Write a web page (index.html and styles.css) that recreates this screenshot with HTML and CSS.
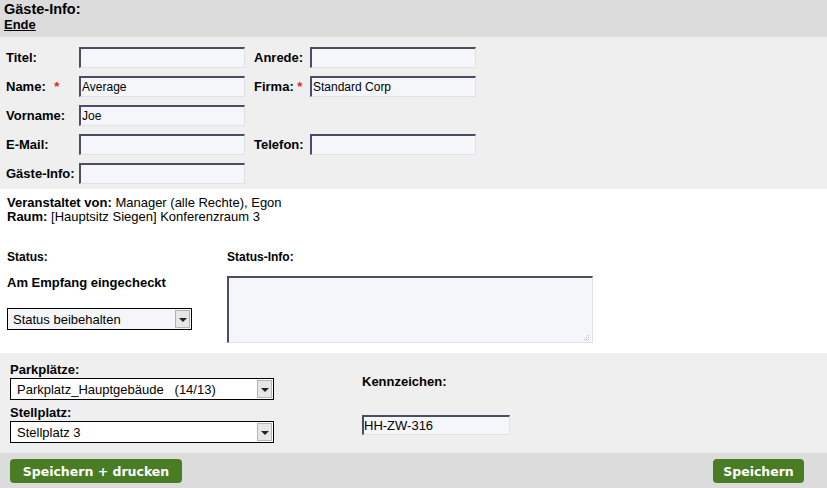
FILE: index.html
```html
<!DOCTYPE html>
<html lang="de">
<head>
  <meta charset="UTF-8" />
  <title>Gäste-Info</title>
  <link rel="stylesheet" href="styles.css">
</head>
<body>
  <div class="head">
    <div class="head-title">Gäste-Info:</div>
    <a href="#" class="head-link">Ende</a>
  </div>

  <div class="guest">
    <label class="lbl">Titel:</label>
    <input class="field" type="text" value="">
    <label class="lbl lbl-right">Anrede:</label>
    <input class="field" type="text" value="">

    <label class="lbl">Name: <span class="req">*</span></label>
    <input class="field" type="text" value="Average">
    <label class="lbl lbl-right">Firma: <span class="req">*</span></label>
    <input class="field" type="text" value="Standard Corp">

    <label class="lbl">Vorname:</label>
    <input class="field" type="text" value="Joe">
    <span></span><span></span>

    <label class="lbl">E-Mail:</label>
    <input class="field" type="text" value="">
    <label class="lbl lbl-right">Telefon:</label>
    <input class="field" type="text" value="">

    <label class="lbl">Gäste-Info:</label>
    <input class="field" type="text" value="">
  </div>

  <div class="meta">
    <div><b>Veranstaltet von:</b> Manager (alle Rechte), Egon</div>
    <div><b>Raum:</b> [Hauptsitz Siegen] Konferenzraum 3</div>
  </div>

  <div class="status">
    <div class="status-left">
      <div class="small-lbl">Status:</div>
      <div class="state">Am Empfang eingecheckt</div>
      <div class="select status-select">
        <span>Status beibehalten</span>
        <span class="arrow"></span>
      </div>
    </div>
    <div class="status-right">
      <div class="small-lbl">Status-Info:</div>
      <div class="notes">
        <svg class="grip" width="7" height="7" viewBox="0 0 7 7">
          <rect x="5" y="1" width="1" height="1" fill="#b5b5b5"/>
          <rect x="3" y="3" width="1" height="1" fill="#b5b5b5"/>
          <rect x="5" y="3" width="1" height="1" fill="#b5b5b5"/>
          <rect x="1" y="5" width="1" height="1" fill="#b5b5b5"/>
          <rect x="3" y="5" width="1" height="1" fill="#b5b5b5"/>
          <rect x="5" y="5" width="1" height="1" fill="#b5b5b5"/>
        </svg>
      </div>
    </div>
  </div>

  <div class="parking">
    <div class="parking-left">
      <div class="park-lbl">Parkplätze:</div>
      <div class="select park-select">
        <span>Parkplatz_Hauptgebäude&nbsp;&nbsp;&nbsp;(14/13)</span>
        <span class="arrow"></span>
      </div>
      <div class="park-lbl">Stellplatz:</div>
      <div class="select park-select">
        <span>Stellplatz 3</span>
        <span class="arrow"></span>
      </div>
    </div>
    <div class="parking-right">
      <div class="plate-lbl">Kennzeichen:</div>
      <input class="field plate" type="text" value="HH-ZW-316">
    </div>
  </div>

  <div class="foot">
    <button class="btn btn-print">Speichern + drucken</button>
    <button class="btn btn-save">Speichern</button>
  </div>
</body>
</html>
```

FILE: styles.css
```css
body {
  margin: 0;
  font-family: "Liberation Sans", Arial, sans-serif;
  font-size: 12px;
  color: #000;
  background: #fff;
}

.head {
  background: #dcdcdc;
  height: 37px;
  padding: 2px 4px 0;
  box-sizing: border-box;
}

.head-title {
  font-weight: 700;
  font-size: 14.5px;
  line-height: 15px;
}

.head-link {
  font-weight: bold;
  font-size: 13px;
  line-height: 15px;
  color: #000;
}

.guest {
  background: #efefef;
  display: grid;
  grid-template-columns: 73px 166px 65px 166px;
  grid-auto-rows: 21px;
  row-gap: 8px;
  align-items: center;
  padding: 10px 6px 8px;
  height: 152px;
  box-sizing: border-box;
}

.lbl {
  font-weight: bold;
  font-size: 13px;
  white-space: nowrap;
}

.lbl-right {
  padding-left: 9px;
}

.req {
  color: #e8202a;
  margin-left: 5px;
}

.lbl-right .req {
  margin-left: 0;
}

.field {
  height: 21px;
  width: 166px;
  box-sizing: border-box;
  margin: 0;
  padding: 0 1px;
  font-family: "Liberation Sans", Arial, sans-serif;
  font-size: 12px;
  background: #f5f6fa;
  border: 1px solid #e0e1e6;
  border-top: 2px solid #4c4c63;
  border-left: 2px solid #4c4c63;
  outline: none;
}

.meta {
  padding: 7px 7px 0;
  height: 54px;
  line-height: 14px;
  font-size: 13px;
}

.status {
  display: flex;
  height: 103px;
}

.status-left {
  width: 227px;
  padding-left: 7px;
  box-sizing: border-box;
}

.small-lbl {
  font-weight: bold;
  line-height: 14px;
}

.state {
  font-weight: bold;
  font-size: 13px;
  margin-top: 11px;
  line-height: 16px;
}

.select {
  display: flex;
  align-items: center;
  justify-content: space-between;
  box-sizing: border-box;
  background: #f5f6fa;
  border: 1px solid #000;
  font-size: 13px;
  padding-left: 5px;
}

.status-select {
  width: 185px;
  height: 22px;
  margin-top: 17px;
}

.arrow {
  width: 15px;
  height: 18px;
  margin-right: 1px;
  background: #e6e6e6;
  border: 1px solid #b4b4b4;
  box-sizing: border-box;
  position: relative;
}

.arrow::after {
  content: "";
  position: absolute;
  left: 3px;
  top: 7px;
  border-left: 4px solid transparent;
  border-right: 4px solid transparent;
  border-top: 4px solid #222;
}

.notes {
  margin-top: 12px;
  width: 366px;
  height: 67px;
  box-sizing: border-box;
  background: #f5f6fa;
  border: 1px solid #e0e1e6;
  border-top: 2px solid #4c4c63;
  border-left: 2px solid #4c4c63;
  display: flex;
  justify-content: flex-end;
  align-items: flex-end;
}

.grip {
  display: block;
  margin: 0 2px 1px 0;
}

.parking {
  background: #efefef;
  display: flex;
  height: 100px;
  box-sizing: border-box;
  padding: 9px 0 0 10px;
}

.parking-left {
  width: 352px;
}

.park-lbl {
  font-weight: bold;
  font-size: 13px;
  line-height: 16px;
}

.park-select {
  width: 264px;
  height: 22px;
  background: #fff;
  padding-left: 6px;
  margin-bottom: 5px;
}

.plate-lbl {
  font-weight: bold;
  font-size: 13px;
  margin-top: 12px;
  line-height: 16px;
}

.plate {
  display: block;
  width: 148px;
  height: 20px;
  margin-top: 25px;
  font-size: 13px;
  padding: 0;
}

.foot {
  background: #dcdcdc;
  height: 35px;
  display: flex;
  justify-content: space-between;
  align-items: center;
  padding: 0 23px 0 10px;
}

.btn {
  background: #4a7c23;
  color: #fff;
  border: none;
  border-radius: 4px;
  font-family: "DejaVu Sans", Verdana, sans-serif;
  font-weight: bold;
  font-size: 12.5px;
  height: 24px;
  padding: 0;
  margin-top: 1px;
  text-align: center;
}

.btn-print {
  width: 172px;
}

.btn-save {
  width: 91px;
}
```
